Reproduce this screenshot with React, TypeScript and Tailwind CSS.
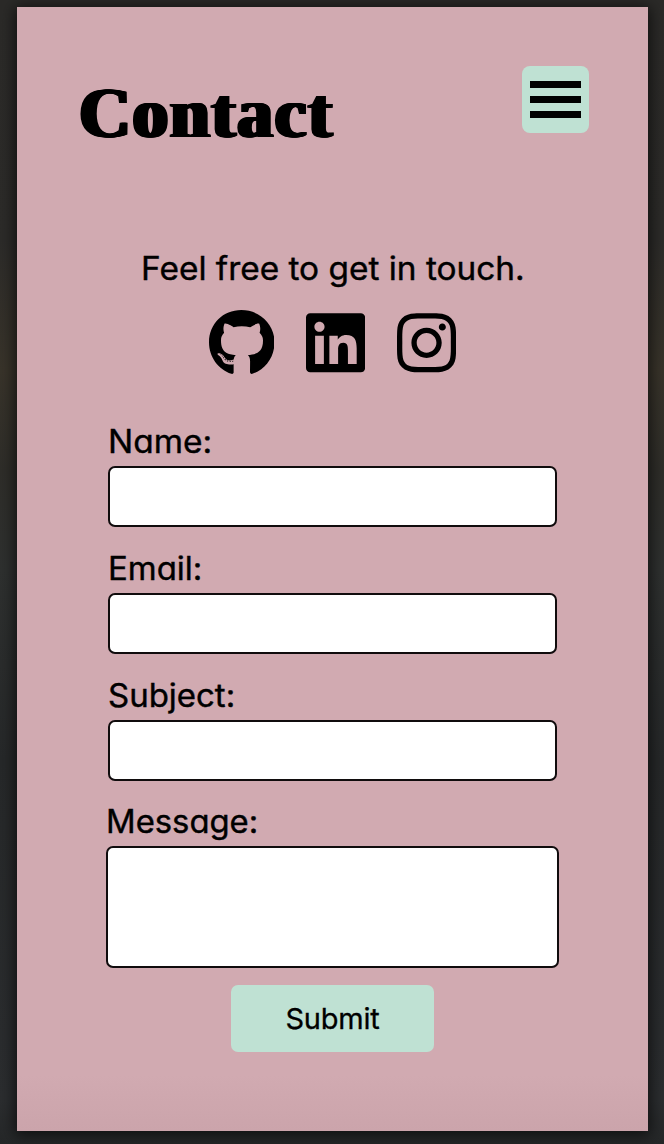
import { FaGithub, FaInstagram, FaLinkedin } from "react-icons/fa";

const geometric =
  "font-['Inter','Open_Sans',sans-serif] [font-feature-settings:'cv11','ss03'] font-normal [-webkit-text-stroke:0.4px_black] text-black whitespace-nowrap";

function Field({ label, stretch }: { label: string; stretch: string }) {
  return (
    <label className="mb-[17px] block">
      <span className={`${geometric} ${stretch} block h-12 origin-left pt-[1px] text-[32px] leading-[48px]`}>{label}</span>
      <input
        type="text"
        className="mt-[1px] block h-[61px] w-[449px] rounded-[7px] border-2 border-[#100c0d] bg-white px-3 text-2xl outline-none"
      />
    </label>
  );
}

export default function App() {
  return (
    <div className="h-[1144px] w-[664px] overflow-hidden bg-[linear-gradient(180deg,#2b2a28_0px,#2c2b29_240px,#38332a_370px,#2e2d29_470px,#2e302f_570px,#262829_760px,#2b2d2f_1100px,#252728_1144px)] pl-[17px] pt-[7px]">
      <main className="flex h-[1124px] w-[631px] flex-col bg-[linear-gradient(180deg,#d1aab1_0%,#d1aab1_95%,#cba4ab_100%)] shadow-[0_2px_14px_2px_rgba(0,0,0,0.65)]">
        <header className="flex h-[238px] justify-between pl-[62px] pr-[59px] pt-[59px]">
          <h1 className="mt-[2px] h-[90px] whitespace-nowrap font-['Liberation_Serif',serif] text-[71px] font-bold leading-[90px] tracking-[2px] text-black [text-shadow:1px_0_black,-1px_0_black,2px_0_black,-2px_0_black,2.7px_0_black]">
            Contact
          </h1>
          <button aria-label="Menu" className="flex size-[67px] flex-col items-center justify-center gap-2 rounded-lg bg-[#bfe1d3]">
            <span className="h-[7px] w-[51px] bg-black" />
            <span className="h-[7px] w-[51px] bg-black" />
            <span className="h-[7px] w-[51px] bg-black" />
          </button>
        </header>
        <section className="flex flex-col items-center">
          <p className={`${geometric} h-12 scale-x-[1.043] text-[32px] leading-[48px]`}>Feel free to get in touch.</p>
          <div className="mt-[15.5px] flex h-[68px] items-center gap-8 text-black">
            <FaGithub className="h-[67.6px] w-[65.5px]" />
            <FaLinkedin className="h-[67.6px] w-[59.1px]" />
            <FaInstagram className="h-[67.6px] w-[59.1px]" />
          </div>
        </section>
        <form className="mt-[40.5px] flex flex-col pl-[91px]">
          <Field label="Name:" stretch="scale-x-[1.045]" />
          <Field label="Email:" stretch="scale-x-[1.03]" />
          <Field label="Subject:" stretch="scale-x-[1.03]" />
          <label className="-ml-[2px] block">
            <span className={`${geometric} block h-12 origin-left scale-x-[1.025] text-[32px] leading-[48px]`}>Message:</span>
            <textarea className="block h-[122px] w-[453px] resize-none rounded-[7px] border-2 border-[#100c0d] bg-white p-3 text-2xl outline-none" />
          </label>
          <button
            type="button"
            className="ml-[123px] mt-[17px] h-[67px] w-[203px] rounded-[7px] bg-[#bfe1d3] font-['Inter',sans-serif] text-[29px] tracking-[-0.2px] text-black [-webkit-text-stroke:0.3px_black]"
          >
            Submit
          </button>
        </form>
      </main>
    </div>
  );
}
